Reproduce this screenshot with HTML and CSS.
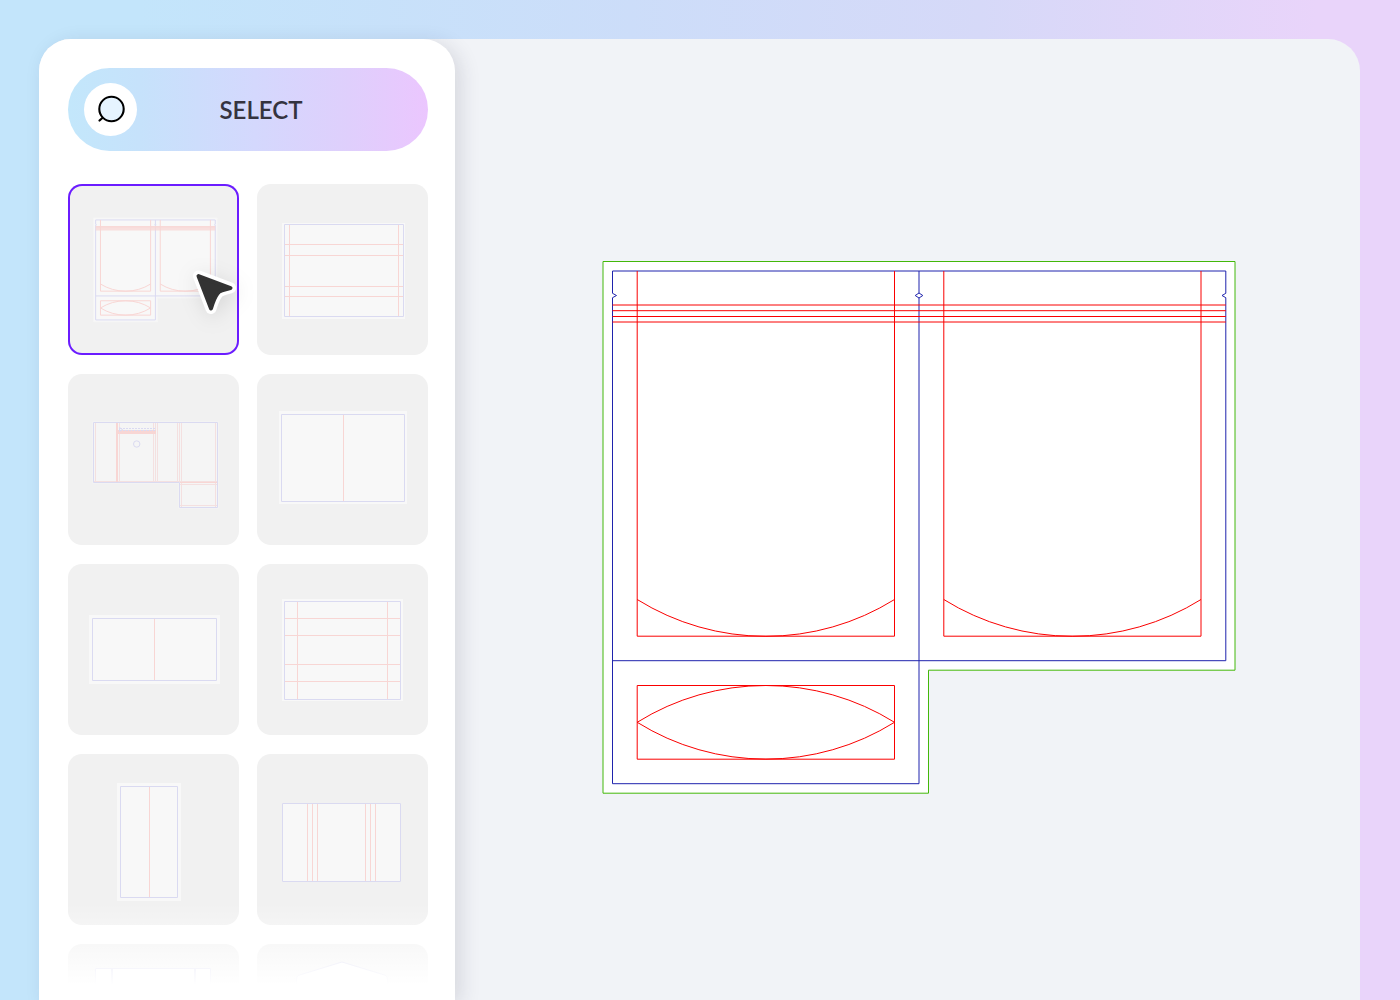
FILE: index.html
```html
<!DOCTYPE html>
<html lang="en">
<head>
  <meta charset="UTF-8">
  <meta name="viewport" content="width=device-width, initial-scale=1.0">
  <title>Dieline</title>
  <link rel="stylesheet" href="styles.css">
</head>
<body>

  <div class="app">

    <!-- Template picker -->
    <aside class="sidebar">
      <button class="select-btn" type="button">
        <span class="select-icon">
          <svg viewBox="0 0 53 53" aria-hidden="true">
            <path d="M15.5 37.5 L19.5 34" stroke="#000" stroke-width="2.2" stroke-linecap="round"/>
            <circle cx="27.5" cy="26" r="12.2" fill="#e6f4ff" stroke="#000" stroke-width="2.1"/>
          </svg>
        </span>
        <span class="select-label">SELECT</span>
      </button>

      <div class="templates">
        <button class="card selected" type="button">
          <svg class="thumb" viewBox="0 0 171 171">
            <use href="#pouch" transform="translate(25.6 34) scale(0.195)"/>
          </svg>
          <svg class="cursor" viewBox="0 0 46 46">
            <path class="cursor-edge" d="M6.5 7L38.5 19Q27 21.5 25.5 24.5Q22 29 19 39.5Z"/>
            <path class="cursor-body" d="M6.5 7L38.5 19Q27 21.5 25.5 24.5Q22 29 19 39.5Z"/>
          </svg>
        </button>

        <button class="card" type="button">
          <svg class="thumb" viewBox="0 0 171 171">
            <rect class="paper" x="25" y="39" width="123" height="96"/>
            <path class="fold" d="M32.5 40V133M141.5 40V133M27 60.5H147M27 71.5H147M27 102.5H147M27 112.5H147"/>
            <rect class="cut" x="27.5" y="40.5" width="119" height="92"/>
          </svg>
        </button>

        <button class="card" type="button">
          <svg class="thumb" viewBox="0 0 171 171">
            <path class="paper faint" d="M24.5 47.5H150.5V134.5H110.5V109.5H24.5Z"/>
            <path class="fold soft" d="M27.5 48V108M51.5 48V108M85.5 48V108M87.5 48V108M89.5 48V108M109.5 48V108M111.5 48V108M113.5 48V133M147.5 48V133M25 107.5H150M111 110.5H150M111 131.5H150"/>
            <path class="fold" d="M48.5 48V109M49.5 48V109M50 56.5H88M50 57.5H88M50 58.5H88M50 59.5H88M112 108.5H150"/>
            <path class="cut" d="M111.5 108.5H25.5V48.5H149.5V133.5H111.5V108.5"/>
            <path class="cut dashed" d="M52 54.5H88M52 56.5H88"/>
            <path class="cut" d="M51.5 53.5L54.5 55.5L51.5 57.5Z"/>
            <circle class="cut" cx="68.7" cy="70" r="3.2"/>
          </svg>
        </button>

        <button class="card" type="button">
          <svg class="thumb" viewBox="0 0 171 171">
            <rect class="paper" x="22" y="37" width="128" height="93"/>
            <path class="fold" d="M86.5 40V128"/>
            <rect class="cut" x="24.5" y="40.5" width="123" height="87"/>
          </svg>
        </button>

        <button class="card" type="button">
          <svg class="thumb" viewBox="0 0 171 171">
            <rect class="paper" x="21" y="51" width="131" height="69"/>
            <path class="fold" d="M86.5 54V117"/>
            <rect class="cut" x="24.5" y="54.5" width="124" height="62"/>
          </svg>
        </button>

        <button class="card" type="button">
          <svg class="thumb" viewBox="0 0 171 171">
            <rect class="paper" x="25" y="35" width="121" height="102"/>
            <path class="fold" d="M40.5 37V136M130.5 37V136M27 54.5H144M27 71.5H144M27 100.5H144M27 117.5H144"/>
            <rect class="cut" x="27.5" y="37.5" width="116" height="98"/>
          </svg>
        </button>

        <button class="card" type="button">
          <svg class="thumb" viewBox="0 0 171 171">
            <rect class="paper" x="49" y="29" width="64" height="118"/>
            <path class="fold" d="M81.5 32V144"/>
            <rect class="cut" x="52.5" y="32.5" width="57" height="111"/>
          </svg>
        </button>

        <button class="card" type="button">
          <svg class="thumb" viewBox="0 0 171 171">
            <rect class="paper" x="25" y="49" width="119" height="79"/>
            <path class="fold" d="M50.5 49V128M55.5 49V128M60.5 49V128M108.5 49V128M113.5 49V128M118.5 49V128"/>
            <rect class="cut" x="25.5" y="49.5" width="118" height="78"/>
          </svg>
        </button>

        <button class="card" type="button">
          <svg class="thumb last" viewBox="0 0 171 171">
            <rect class="paper" x="27" y="24" width="116" height="110"/>
            <path class="cut" d="M43.5 24V134M44.5 24V134M126.5 24V134M127.5 24V134"/>
            <rect class="cut" x="27.5" y="24.5" width="115" height="110"/>
          </svg>
        </button>

        <button class="card" type="button">
          <svg class="thumb last" viewBox="0 0 171 171">
            <path class="paper" d="M85 18L129 31.5Q130.5 32.5 130.5 36V140H39.5V36Q39.5 32.5 41 31.5Z"/>
            <path class="cut" d="M85 18L129 31.5Q130.5 32.5 130.5 36V140H39.5V36Q39.5 32.5 41 31.5Z"/>
          </svg>
        </button>
      </div>
    </aside>

    <!-- Dieline preview -->
    <main class="canvas">
      <svg class="dieline" viewBox="0 0 634 534">
        <defs>
          <g id="pouch">
            <path class="bleed" d="M1 0.5H633V409.2H326.5V532.2H1Z"/>
            <!-- outline with the tear notches -->
            <path class="cut" d="M10.5 10H623.8V32.3L620 34.5L623.8 36.7V399.7H10.5M10.5 10V32.3L14.5 34.5L10.5 36.7V522.7H317V37L313.2 34.5L317 32L320.8 34.5L317 37M317 32V10"/>
            <path class="fold" d="M10.5 44H623.8M10.5 49.7H623.8M10.5 55.5H623.8M10.5 61H623.8"/>
            <path class="fold" d="M35.2 10V375.2H292.5V10M35.2 338.5A243.3 243.3 0 0 0 292.5 338.5"/>
            <path class="fold" d="M341.8 10V375.2H599V10M341.8 338.5A243.3 243.3 0 0 0 599 338.5"/>
            <rect class="fold" x="35.2" y="424.5" width="257.3" height="73.7"/>
            <path class="fold" d="M35.2 461.3A243.3 243.3 0 0 1 292.5 461.3A243.3 243.3 0 0 1 35.2 461.3"/>
          </g>
        </defs>
        <use href="#pouch"/>
      </svg>
    </main>

  </div>

</body>
</html>
```
FILE: styles.css
```css
* {
  box-sizing: border-box;
}

body {
  margin: 0;
  padding: 39px 40px 0 39px;
  height: 100vh;
  overflow: hidden;
  font-family: Lato, "Liberation Sans", sans-serif;
  background: linear-gradient(90deg, #c3e5fb 0%, #c3e5fb 10%, #ccddf9 45%, #d6d9f8 70%, #e9d4fa 94%, #e9d4fa 100%);
}

.app {
  display: flex;
  height: 100%;
  background-color: #f1f3f7;
  border-radius: 32px 32px 0 0;
}

/* sidebar */
.sidebar {
  position: relative;
  flex: 0 0 416px;
  padding: 29px 27px 0 29px;
  overflow: hidden;
  background-color: #ffffff;
  border-radius: 32px 32px 0 0;
  box-shadow: 6px 4px 20px rgba(40, 40, 60, 0.13);
}

/* fades the last row out */
.sidebar::after {
  content: "";
  position: absolute;
  left: 0;
  right: 0;
  bottom: 0;
  height: 97px;
  background: linear-gradient(rgba(255, 255, 255, 0), #ffffff 84%);
  pointer-events: none;
}

button {
  border: none;
  padding: 0;
  font-family: inherit;
  cursor: pointer;
}

.select-btn {
  display: flex;
  align-items: center;
  width: 100%;
  height: 83px;
  padding: 0 43px 0 16px;
  border-radius: 42px;
  background: linear-gradient(90deg, #c3e7fb 0%, #c6e2fb 20%, #d4d8fd 52%, #dfcffc 78%, #ebc6fe 100%);
}

.select-icon {
  width: 53px;
  height: 53px;
  border-radius: 50%;
  background-color: #ffffff;
}

.select-icon svg {
  display: block;
  width: 100%;
}

.select-label {
  flex: 1;
  font-size: 24px;
  font-weight: 600;
  color: #35333f;
}

.templates {
  display: grid;
  grid-template-columns: 1fr 1fr;
  gap: 19px 18px;
  margin-top: 33px;
}

.card {
  position: relative;
  aspect-ratio: 1;
  border-radius: 14px;
  background-color: #f1f1f1;
}

.card.selected {
  box-shadow: inset 0 0 0 2px #6b1cff;
}

.thumb {
  display: block;
  width: 100%;
  --cut: #dadaf1;
  --fold: #f8d6d4;
  --bleed: #f6f6f6;
  --paper: #f8f8f8;
}

.thumb.last {
  --cut: #d3d3ee;
  --paper: #ffffff;
}

.cursor {
  position: absolute;
  left: 124px;
  top: 85px;
  width: 46px;
  height: 46px;
  overflow: visible;
  filter: drop-shadow(2px 4px 10px rgba(0, 0, 0, 0.1));
}

.cursor path {
  stroke-linejoin: round;
}

.cursor-edge {
  fill: #ffffff;
  stroke: #ffffff;
  stroke-width: 11;
}

.cursor-body {
  fill: #333333;
  stroke: #333333;
  stroke-width: 4;
}

/* preview */
.canvas {
  flex: 1;
  display: flex;
  align-items: center;
  justify-content: center;
  padding: 17px 0 0 23px;
}

.dieline {
  width: 634px;
  max-width: 100%;
  --cut: #1f23ad;
  --fold: #fa0000;
  --bleed: #43b80a;
  --paper: #ffffff;
}

/* dieline strokes, colours come from the parent svg */
.cut, .fold, .bleed {
  fill: none;
  stroke-width: 1;
  vector-effect: non-scaling-stroke;
}

.cut {
  stroke: var(--cut);
}

.fold {
  stroke: var(--fold);
}

.bleed {
  fill: var(--paper);
  stroke: var(--bleed);
}

.paper {
  fill: var(--paper);
}

.paper.faint {
  fill: #f5f5f5;
}

.fold.soft {
  stroke: #f4e0e0;
}

.dashed {
  stroke-dasharray: 2 1;
}
```
